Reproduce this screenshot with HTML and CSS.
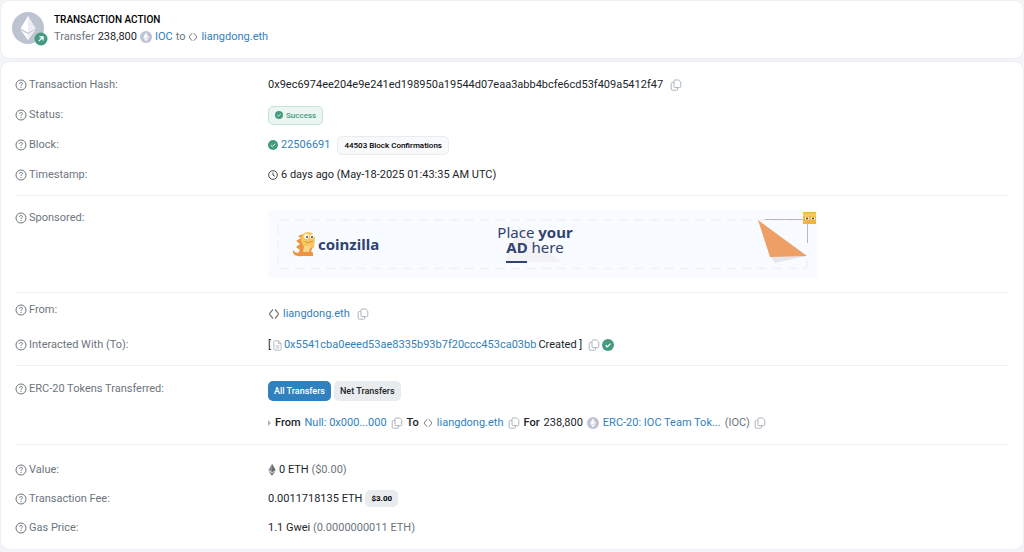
FILE: index.html
```html
<!DOCTYPE html>
<html lang="en">
<head>
    <meta charset="UTF-8">
    <meta name="viewport" content="width=device-width, initial-scale=1">
    <title>Transaction Details</title>
    <link rel="stylesheet" href="styles.css">
</head>
<body>
<svg class="sprite" aria-hidden="true">
    <symbol id="help" viewBox="0 0 12 12">
        <circle cx="6" cy="6" r="5" fill="none" stroke="currentColor"/>
        <path d="M4.5 4.9V4.7C4.5 4 5 3.5 5.7 3.5H6.3C7 3.5 7.5 4 7.5 4.7C7.5 5.6 6 5.7 6 6.8" fill="none" stroke="currentColor"/>
        <circle cx="6" cy="8.3" r=".65" fill="currentColor"/>
    </symbol>
    <symbol id="copy" viewBox="0 0 12 12">
        <path d="M5 1H8.6L10.8 3.1V7.6Q10.8 8.6 9.8 8.6H5Q4 8.6 4 7.6V2Q4 1 5 1Z" fill="none" stroke="currentColor"/>
        <path d="M3.8 3.6H2.2Q1.2 3.6 1.2 4.6V10.2Q1.2 11.2 2.2 11.2H6.6Q7.6 11.2 7.6 10.2V8.8" fill="none" stroke="currentColor"/>
    </symbol>
    <symbol id="check" viewBox="0 0 12 12">
        <circle cx="6" cy="6" r="6" fill="currentColor"/>
        <path d="M3.6 6.2L5.3 7.8L8.5 4.6" fill="none" stroke="#fff" stroke-width="1.2"/>
    </symbol>
    <symbol id="clock" viewBox="0 0 12 12">
        <circle cx="6" cy="6" r="5.2" fill="none" stroke="currentColor"/>
        <path d="M6 3V6.2L8.2 7.5" fill="none" stroke="currentColor"/>
    </symbol>
    <symbol id="ens" viewBox="0 0 12 12">
        <path d="M5 1.5L1.9 5Q1.3 6 1.9 7L5 10.5M7 1.5L10.1 5Q10.7 6 10.1 7L7 10.5" fill="none" stroke="currentColor" stroke-width="1.2"/>
    </symbol>
    <symbol id="token" viewBox="0 0 32 32">
        <circle cx="16" cy="16" r="16" fill="#bcc3d1"/>
        <path d="M16 4L8.5 16.4L16 20.8L23.5 16.4Z" fill="#fff"/>
        <path d="M16 4V20.8L23.5 16.4Z" fill="#ebedf2"/>
        <path d="M8.5 17.8L16 28L23.5 17.8L16 22.2Z" fill="#fff"/>
        <path d="M16 22.2V28L23.5 17.8Z" fill="#ebedf2"/>
    </symbol>
    <symbol id="eth" viewBox="0 0 8 12">
        <path d="M4 0L.4 6.1L4 8.2L7.6 6.1Z" fill="#868d94"/>
        <path d="M4 0V8.2L7.6 6.1Z" fill="#666d74"/>
        <path d="M.4 7L4 12L7.6 7L4 9.1Z" fill="#7b828a"/>
    </symbol>
    <symbol id="file" viewBox="0 0 10 12">
        <path d="M2 .8H6L9 3.6V10.2Q9 11.2 8 11.2H2Q1 11.2 1 10.2V1.8Q1 .8 2 .8ZM6 .8V3.8H9M3 6.4H7M3 8.6H7" fill="none" stroke="currentColor"/>
    </symbol>
</svg>

<section class="card action">
    <div class="action-icon">
        <svg class="token-lg"><use href="#token"/></svg>
        <svg class="action-badge" viewBox="0 0 14 14">
            <circle cx="7" cy="7" r="6.5" fill="#449b80"/>
            <path d="M4.8 9.2L9 5M5.4 4.9H9.1V8.6" fill="none" stroke="#fff" stroke-width="1.2"/>
        </svg>
    </div>
    <div>
        <h1>TRANSACTION ACTION</h1>
        <div class="line">
            <span class="muted">Transfer</span>
            <span>238,800</span>
            <svg class="icon"><use href="#token"/></svg>
            <a href="#">IOC</a>
            <span class="muted">to</span>
            <svg class="icon-md ens"><use href="#ens"/></svg>
            <a href="#">liangdong.eth</a>
        </div>
    </div>
</section>

<main class="card details">
    <section class="group overview">
        <div class="row">
            <div class="label"><svg class="icon"><use href="#help"/></svg>Transaction Hash:</div>
            <div class="value">
                <span>0x9ec6974ee204e9e241ed198950a19544d07eaa3abb4bcfe6cd53f409a5412f47</span>
                <button class="copy" aria-label="Copy"><svg class="icon"><use href="#copy"/></svg></button>
            </div>
        </div>
        <div class="row">
            <div class="label"><svg class="icon"><use href="#help"/></svg>Status:</div>
            <div class="value">
                <span class="badge success"><svg class="icon-sm"><use href="#check"/></svg>Success</span>
            </div>
        </div>
        <div class="row">
            <div class="label"><svg class="icon"><use href="#help"/></svg>Block:</div>
            <div class="value">
                <svg class="icon-md green"><use href="#check"/></svg>
                <a href="#">22506691</a>
                <span class="badge confirmations">44503 Block Confirmations</span>
            </div>
        </div>
        <div class="row">
            <div class="label"><svg class="icon"><use href="#help"/></svg>Timestamp:</div>
            <div class="value">
                <svg class="icon-md"><use href="#clock"/></svg>
                <span>6 days ago (May-18-2025 01:43:35 AM UTC)</span>
            </div>
        </div>
    </section>

    <section class="group sponsored">
        <div class="row top">
            <div class="label"><svg class="icon"><use href="#help"/></svg>Sponsored:</div>
            <a class="banner" href="#">
                <svg viewBox="0 0 549 68">
                    <rect width="549" height="68" fill="#f8fbff"/>
                    <path d="M12 10H526M12 58.500H538M10 15V58M539 50V58" fill="none" stroke="#f2f0f1" stroke-width="1.500" stroke-dasharray="9 6.400"/>
                    <path d="M251 16L294 52H236Z" fill="#f3f3f5"/>
                    <!-- mascot -->
                    <path d="M35 24L30 26L33 28L28 31L32 34L28 37L32 40L30 43Q27 43 25 40Q24 47 34 46H45V43L43 41L46 35L40 25Z" fill="#ec9440"/>
                    <path d="M34 25Q38 20 44 23L47 27L46 38L36 37L33 31Z" fill="#f4c85f"/>
                    <path d="M36 36H43L41 42H35Z" fill="#f8d68a"/>
                    <circle cx="38.500" cy="26.500" r="2.400" fill="#fff"/>
                    <circle cx="44" cy="26.500" r="2" fill="#fff"/>
                    <circle cx="39" cy="27" r="1" fill="#47405a"/>
                    <circle cx="44" cy="27" r="1" fill="#47405a"/>
                    <path d="M37 31L39 33L45 31" fill="none" stroke="#dc913f"/>
                    <text class="ad-text ad-bold" x="50" y="40">coinzilla</text>
                    <text class="ad-text" x="267" y="28" text-anchor="middle">Place <tspan class="ad-bold">your</tspan></text>
                    <text class="ad-text" x="267" y="43" text-anchor="middle"><tspan class="ad-bold">AD</tspan> here</text>
                    <path d="M238 52H259" stroke="#31436f" stroke-width="2"/>
                    <!-- paper plane -->
                    <path d="M502 46L507 53L538 46Z" fill="#e6e6ea"/>
                    <path d="M490 10L539 46L502 47Z" fill="#ee9f65"/>
                    <path d="M497 9.500H535M539.500 13V33" fill="none" stroke="#b4b8ce"/>
                    <rect x="535" y="2" width="13" height="12" fill="#edb545"/>
                    <path d="M535 5H548" stroke="#f4ca61" stroke-width="3"/>
                    <path d="M537 8.500H541M543 8.500H547" stroke="#fff" stroke-width="2"/>
                    <path d="M538 8.500H540M544 8.500H546" stroke="#5b4438" stroke-width="1.500"/>
                </svg>
            </a>
        </div>
    </section>

    <section class="group addresses">
        <div class="row top">
            <div class="label"><svg class="icon"><use href="#help"/></svg>From:</div>
            <div class="value from">
                <svg class="icon ens"><use href="#ens"/></svg>
                <a href="#">liangdong.eth</a>
                <button class="copy" aria-label="Copy"><svg class="icon"><use href="#copy"/></svg></button>
            </div>
        </div>
        <div class="row">
            <div class="label"><svg class="icon"><use href="#help"/></svg>Interacted With (To):</div>
            <div class="value contract">
                <span>[</span>
                <svg class="icon-file"><use href="#file"/></svg>
                <a href="#">0x5541cba0eeed53ae8335b93b7f20ccc453ca03bb</a>
                <span>Created ]</span>
                <button class="copy" aria-label="Copy"><svg class="icon"><use href="#copy"/></svg></button>
                <svg class="icon green"><use href="#check"/></svg>
            </div>
        </div>
    </section>

    <section class="group tokens">
        <div class="row top">
            <div class="label"><svg class="icon"><use href="#help"/></svg>ERC-20 Tokens Transferred:</div>
            <div>
                <div class="tabs">
                    <button class="tab active">All Transfers</button>
                    <button class="tab">Net Transfers</button>
                </div>
                <div class="value transfer">
                    <span class="caret"></span>
                    <b>From</b>
                    <a href="#">Null: 0x000...000</a>
                    <button class="copy tight" aria-label="Copy"><svg class="icon"><use href="#copy"/></svg></button>
                    <b>To</b>
                    <svg class="icon-md ens"><use href="#ens"/></svg>
                    <a href="#">liangdong.eth</a>
                    <button class="copy tight" aria-label="Copy"><svg class="icon"><use href="#copy"/></svg></button>
                    <b>For</b>
                    <span>238,800</span>
                    <svg class="icon"><use href="#token"/></svg>
                    <a href="#">ERC-20: IOC Team Tok...</a>
                    <span class="muted">(IOC)</span>
                    <button class="copy tight" aria-label="Copy"><svg class="icon"><use href="#copy"/></svg></button>
                </div>
            </div>
        </div>
    </section>

    <section class="group fees">
        <div class="row">
            <div class="label"><svg class="icon"><use href="#help"/></svg>Value:</div>
            <div class="value">
                <svg class="icon-eth"><use href="#eth"/></svg>
                <span>0 ETH <span class="muted">($0.00)</span></span>
            </div>
        </div>
        <div class="row">
            <div class="label"><svg class="icon"><use href="#help"/></svg>Transaction Fee:</div>
            <div class="value">
                <span>0.0011718135 ETH</span>
                <span class="badge price">$3.00</span>
            </div>
        </div>
        <div class="row">
            <div class="label"><svg class="icon"><use href="#help"/></svg>Gas Price:</div>
            <div class="value">
                <span>1.1 Gwei <span class="muted">(0.0000000011 ETH)</span></span>
            </div>
        </div>
    </section>
</main>
</body>
</html>
```
FILE: styles.css
```css
* {
    box-sizing: border-box;
}

body {
    margin: 0;
    background: #f3f4f7;
    color: #212529;
    font: 11px/16px Roboto, "Liberation Sans", sans-serif;
}

a {
    color: #3081bd;
    text-decoration: none;
}

svg {
    display: block;
    flex: none;
}

button {
    margin: 0;
    padding: 0;
    border: 0;
    background: none;
    font: inherit;
    cursor: pointer;
}

b {
    font-weight: 500;
}

.sprite {
    position: absolute;
    width: 0;
    height: 0;
}

.card {
    background: #fff;
    border: 1px solid #edeff2;
    border-radius: 10px;
}

.muted {
    color: #6c757d;
}

.green {
    color: #449b80;
}

/* icons */
.icon {
    width: 12px;
    height: 12px;
}

.icon-md {
    width: 10px;
    height: 10px;
}

.icon-sm {
    width: 8px;
    height: 8px;
}

.icon-file {
    width: 9px;
    height: 11px;
    color: #adb5bd;
}

.icon-eth {
    width: 8px;
    height: 12px;
}

.ens {
    color: #777;
}

.copy {
    margin-left: 4px;
    color: #adb5bd;
}

.copy.tight {
    margin-left: 0;
}

/* transaction action */
.action {
    display: flex;
    gap: 10px;
    padding: 11px;
}

.action-icon {
    position: relative;
    width: 32px;
}

.token-lg {
    width: 32px;
    height: 32px;
}

.action-badge {
    position: absolute;
    right: -4px;
    top: 20px;
    width: 14px;
    height: 14px;
}

h1 {
    margin: 0;
    color: #000;
    font-size: 10px;
    font-weight: 500;
    line-height: 16px;
}

.line,
.value {
    display: flex;
    align-items: center;
    gap: 3px;
}

.line {
    margin-top: 1px;
    padding-bottom: 2px;
}

/* details */
.details {
    margin-top: 2px;
    padding: 0 14px;
}

.group {
    border-bottom: 1px solid #eff1f3;
}

.group:last-child {
    border-bottom: 0;
}

.overview {
    padding: 8px 0 5px;
}

.row {
    display: grid;
    grid-template-columns: 253px 1fr;
    align-items: center;
    min-height: 30px;
}

.row.top {
    align-items: start;
    min-height: 28px;
}

.label {
    display: flex;
    align-items: center;
    gap: 2px;
    color: #6c757d;
}

.badge {
    display: flex;
    align-items: center;
    border: 1px solid #e9ecef;
    border-radius: 5px;
    color: #000;
    font-size: 8px;
    font-weight: 500;
    line-height: 17px;
}

.success {
    gap: 3px;
    padding: 0 6px;
    border-color: #c5e3da;
    background: #ebf5f2;
    color: #449b80;
}

.confirmations {
    margin-left: 4px;
    padding: 0 6px;
    background: #f8f9fa;
}

.price {
    padding: 0 5px;
    background: #e9ecef;
    font-weight: 700;
    line-height: 15px;
}

.sponsored {
    padding: 14px 0;
}

.banner svg {
    width: 100%;
    max-width: 549px;
}

.ad-text {
    fill: #31436f;
    font: 400 15px "Noto Sans", sans-serif;
}

.ad-bold {
    font-weight: 700;
}

.addresses {
    padding: 9px 0 5px;
}

.from {
    padding-top: 4px;
}

.contract {
    gap: 2px;
}

.tokens {
    padding: 15px 0 13px;
}

.tabs {
    display: flex;
    gap: 3px;
}

.tab {
    padding: 0 6px;
    border-radius: 5px;
    background: #e9ecef;
    color: #212529;
    font-size: 9px;
    font-weight: 500;
    line-height: 20px;
}

.tab.active {
    background: #3081bd;
    color: #fff;
}

.transfer {
    gap: 4px;
    margin-top: 14px;
}

.caret {
    border: 3px solid transparent;
    border-right: 0;
    border-left-color: #adb5bd;
}

.fees {
    padding: 10px 0 7px;
}

.fees .row {
    min-height: 29px;
}
```
